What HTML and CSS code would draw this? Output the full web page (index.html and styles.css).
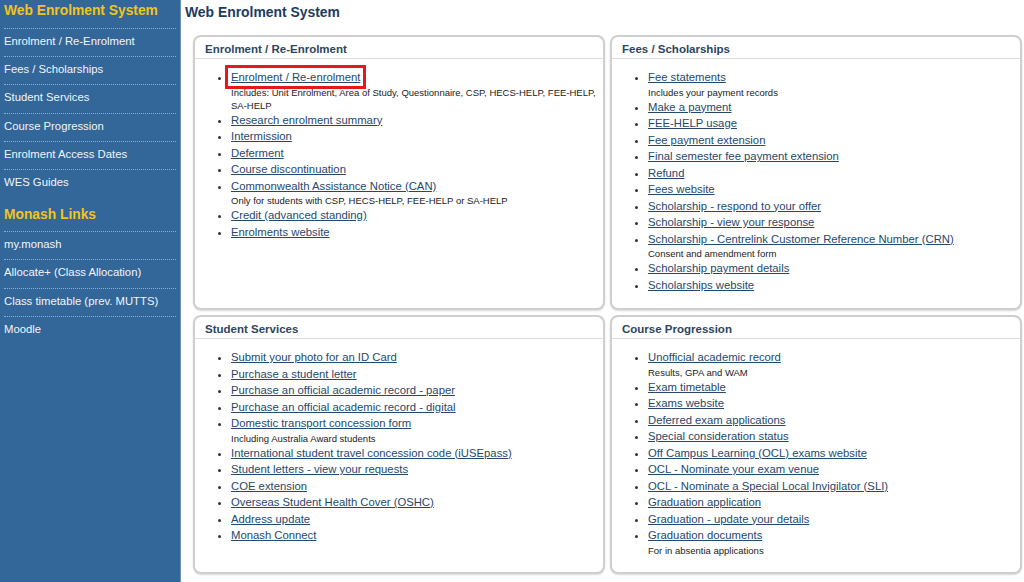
FILE: index.html
```html
<!DOCTYPE html>
<html>
<head>
    <link rel="stylesheet" href="styles.css">
</head>
<body>
    <div class="sidebar">
        <div class="side-title">Web Enrolment System</div>
        <a class="side-link" href="#">Enrolment / Re-Enrolment</a>
        <a class="side-link" href="#">Fees / Scholarships</a>
        <a class="side-link" href="#">Student Services</a>
        <a class="side-link" href="#">Course Progression</a>
        <a class="side-link" href="#">Enrolment Access Dates</a>
        <a class="side-link" href="#">WES Guides</a>
        <div class="side-title side-title-second">Monash Links</div>
        <a class="side-link" href="#">my.monash</a>
        <a class="side-link" href="#">Allocate+ (Class Allocation)</a>
        <a class="side-link" href="#">Class timetable (prev. MUTTS)</a>
        <a class="side-link" href="#">Moodle</a>
    </div>

    <div class="main">
        <div class="page-title">Web Enrolment System</div>
        <div class="panels">
            <div class="panel">
                <div class="panel-title">Enrolment / Re-Enrolment</div>
                <ul class="links">
                    <li><a href="#" class="marked">Enrolment / Re-enrolment</a>
                        <div class="note">Includes: Unit Enrolment, Area of Study, Questionnaire, CSP, HECS-HELP, FEE-HELP, SA-HELP</div></li>
                    <li><a href="#">Research enrolment summary</a></li>
                    <li><a href="#">Intermission</a></li>
                    <li><a href="#">Deferment</a></li>
                    <li><a href="#">Course discontinuation</a></li>
                    <li><a href="#">Commonwealth Assistance Notice (CAN)</a>
                        <div class="note">Only for students with CSP, HECS-HELP, FEE-HELP or SA-HELP</div></li>
                    <li><a href="#">Credit (advanced standing)</a></li>
                    <li><a href="#">Enrolments website</a></li>
                </ul>
            </div>

            <div class="panel">
                <div class="panel-title">Fees / Scholarships</div>
                <ul class="links">
                    <li><a href="#">Fee statements</a>
                        <div class="note">Includes your payment records</div></li>
                    <li><a href="#">Make a payment</a></li>
                    <li><a href="#">FEE-HELP usage</a></li>
                    <li><a href="#">Fee payment extension</a></li>
                    <li><a href="#">Final semester fee payment extension</a></li>
                    <li><a href="#">Refund</a></li>
                    <li><a href="#">Fees website</a></li>
                    <li><a href="#">Scholarship - respond to your offer</a></li>
                    <li><a href="#">Scholarship - view your response</a></li>
                    <li><a href="#">Scholarship - Centrelink Customer Reference Number (CRN)</a>
                        <div class="note">Consent and amendment form</div></li>
                    <li><a href="#">Scholarship payment details</a></li>
                    <li><a href="#">Scholarships website</a></li>
                </ul>
            </div>

            <div class="panel">
                <div class="panel-title">Student Services</div>
                <ul class="links">
                    <li><a href="#">Submit your photo for an ID Card</a></li>
                    <li><a href="#">Purchase a student letter</a></li>
                    <li><a href="#">Purchase an official academic record - paper</a></li>
                    <li><a href="#">Purchase an official academic record - digital</a></li>
                    <li><a href="#">Domestic transport concession form</a>
                        <div class="note">Including Australia Award students</div></li>
                    <li><a href="#">International student travel concession code (iUSEpass)</a></li>
                    <li><a href="#">Student letters - view your requests</a></li>
                    <li><a href="#">COE extension</a></li>
                    <li><a href="#">Overseas Student Health Cover (OSHC)</a></li>
                    <li><a href="#">Address update</a></li>
                    <li><a href="#">Monash Connect</a></li>
                </ul>
            </div>

            <div class="panel">
                <div class="panel-title">Course Progression</div>
                <ul class="links">
                    <li><a href="#">Unofficial academic record</a>
                        <div class="note">Results, GPA and WAM</div></li>
                    <li><a href="#">Exam timetable</a></li>
                    <li><a href="#">Exams website</a></li>
                    <li><a href="#">Deferred exam applications</a></li>
                    <li><a href="#">Special consideration status</a></li>
                    <li><a href="#">Off Campus Learning (OCL) exams website</a></li>
                    <li><a href="#">OCL - Nominate your exam venue</a></li>
                    <li><a href="#">OCL - Nominate a Special Local Invigilator (SLI)</a></li>
                    <li><a href="#">Graduation application</a></li>
                    <li><a href="#">Graduation - update your details</a></li>
                    <li><a href="#">Graduation documents</a>
                        <div class="note">For in absentia applications</div></li>
                </ul>
            </div>
        </div>
    </div>
</body>
</html>
```

FILE: styles.css
```css
body {
    margin: 0;
    padding: 0;
    font-family: 'Liberation Sans', Arial, sans-serif;
    background-color: #FFF;
    display: flex;
    height: 100vh;
    overflow: hidden;
}
.sidebar {
    width: 181px;
    flex-shrink: 0;
    background-color: #336699;
    border-right: 1px solid #6d93bb;
    padding: 0 4px;
    box-sizing: border-box;
}
.side-title {
    color: #F2C41A;
    font-size: 13.8px;
    font-weight: bold;
    padding: 3px 0 10px 0;
}
.side-title-second {
    padding: 10px 0 9px 0;
}
.side-link {
    display: block;
    height: 28.2px;
    line-height: 24px;
    font-size: 11.3px;
    color: #F2F5F9;
    text-decoration: none;
    border-top: 1px dotted #8eaecf;
    box-sizing: border-box;
}
.main {
    flex: 1;
    padding: 4px 2px 0 12px;
}
.page-title {
    font-size: 13.9px;
    font-weight: bold;
    color: #1d3b5e;
    margin-left: -8px;
    margin-bottom: 15px;
}
.panels {
    display: grid;
    grid-template-columns: 1fr 1fr;
    column-gap: 5px;
    row-gap: 5px;
}
.panel {
    border: 2px solid #cfcfcf;
    border-radius: 8px;
    box-shadow: 0 1px 2px rgba(0, 0, 0, 0.15);
    background-color: #FFF;
}
.panel-title {
    font-size: 11.5px;
    font-weight: bold;
    color: #2d4560;
    padding: 6px 10px 3px 10px;
    border-bottom: 1px solid #dcdcdc;
}
.links {
    margin: 10px 0 15px 0;
    padding-left: 36px;
    list-style: disc;
}
.links li {
    font-size: 11.3px;
    line-height: 16.5px;
    color: #333;
}
.links a {
    color: #26486c;
}
.note {
    font-size: 9.5px;
    line-height: 13px;
    color: #222;
}
.marked {
    outline: 3px solid #E3191C;
    outline-offset: 3px;
}
```
